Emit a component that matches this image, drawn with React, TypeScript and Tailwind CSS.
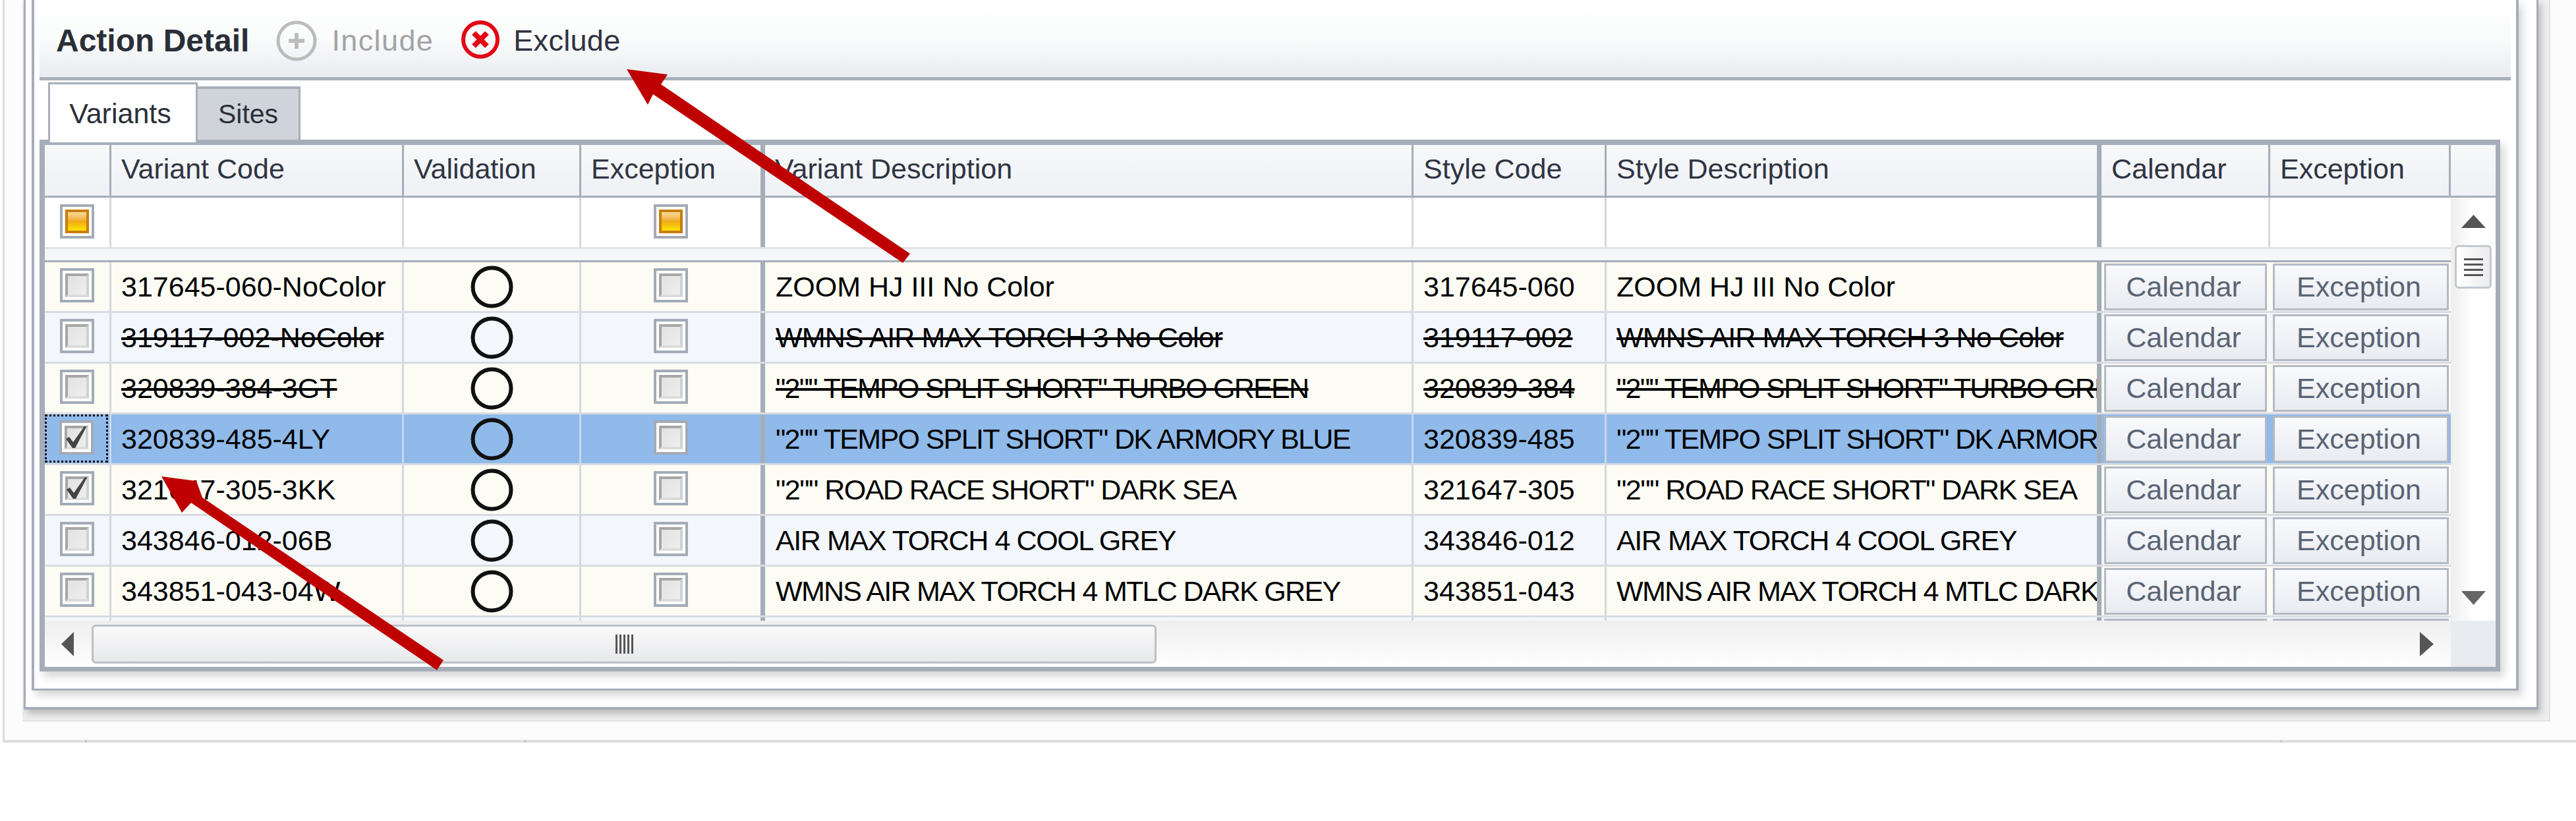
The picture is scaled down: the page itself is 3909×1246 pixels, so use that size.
import React from 'react';

type Row = {
    code: string;
    desc: string;
    style: string;
    tight: string;
    struck?: boolean;
    checked?: boolean;
    selected?: boolean;
};

const rows: Row[] = [
    { code: '317645-060-NoColor', desc: 'ZOOM HJ III No Color', style: '317645-060', tight: '' },
    { code: '319117-002-NoColor', desc: 'WMNS AIR MAX TORCH 3 No Color', style: '319117-002', tight: 'tracking-[-0.86px]', struck: true },
    { code: '320839-384-3GT', desc: '"2"" TEMPO SPLIT SHORT" TURBO GREEN', style: '320839-384', tight: 'tracking-[-1.7px]', struck: true },
    { code: '320839-485-4LY', desc: '"2"" TEMPO SPLIT SHORT" DK ARMORY BLUE', style: '320839-485', tight: 'tracking-[-1.64px]', checked: true, selected: true },
    { code: '321647-305-3KK', desc: '"2"" ROAD RACE SHORT" DARK SEA', style: '321647-305', tight: 'tracking-[-1.5px]', checked: true },
    { code: '343846-012-06B', desc: 'AIR MAX TORCH 4 COOL GREY', style: '343846-012', tight: 'tracking-[-1.4px]' },
    { code: '343851-043-04W', desc: 'WMNS AIR MAX TORCH 4 MTLC DARK GREY', style: '343851-043', tight: 'tracking-[-1.7px]' },
    { code: '', desc: '', style: '', tight: '' },
];

const Check = ({ on, orange }: { on?: boolean; orange?: boolean }) => (
    <div className="mb-[4px] h-[52px] w-[52px] shrink-0 border-[4px] border-[#a3abb6] bg-white p-[4px]">
        {orange ? (
            <div className="h-full w-full border-[4px] border-[#c97d10] bg-gradient-to-b from-[#f6dc9a] via-[#efaa14] to-[#ffe600]" />
        ) : (
            <div className="relative h-full w-full border-[4px] border-[#a6a6a6] border-r-[#d0d0d0] border-b-[#dcdcdc] bg-gradient-to-br from-[#e2e2e2] to-[#eeeeee]">
                {on && (
                    <svg viewBox="0 0 36 36" className="absolute -inset-[4px] h-[36px] w-[36px] overflow-visible">
                        <path d="M2 20 L7 17 L13 25 L30 1 L33 2 L16 34 L12 34 Z" fill="#444" />
                    </svg>
                )}
            </div>
        )}
    </div>
);

const Circle = () => (
    <svg viewBox="0 0 65 65" className="h-[65px] w-[65px]">
        <circle cx="32.5" cy="32.5" r="29" fill="none" stroke="#111" strokeWidth="6" />
    </svg>
);

const GridButton = ({ label, width }: { label: string; width: string }) => (
    <div className={`mt-[2px] flex h-[71px] items-center justify-center border-[3px] border-[#b4bac2] bg-gradient-to-b from-[#f8fafd] to-[#e8ebf0] pr-[6px] text-[#5a6474] ${width}`}>
        {label}
    </div>
);

const HeaderCell = ({ label, className }: { label?: string; className: string }) => (
    <div className={`flex h-full shrink-0 items-center overflow-hidden whitespace-nowrap pl-[15px] pb-[4px] text-[#2f3542] ${className}`}>
        {label}
    </div>
);

const DataRow = ({ row }: { row: Row }) => {
    const bg = row.selected ? 'bg-[#8fbaea]' : rows.indexOf(row) % 2 === 0 ? 'bg-[#fcfcf4]' : 'bg-[#f3f6fb]';
    const strike = row.struck ? 'line-through decoration-[4px] decoration-black' : '';
    const sep = row.selected ? 'border-r-[3px] border-[#c8d8ec]' : 'border-r-[3px] border-[#d4d8de]';
    return (
        <div className={`flex h-[77px] shrink-0 border-b-[3px] border-[#d8dce2] text-black ${bg}`}>
            <div className={`flex h-full w-[101px] shrink-0 ${sep}`}>
                {row.selected ? (
                    <div className="flex h-[73px] w-[96px] items-center justify-center border-[3px] border-dotted border-black">
                        <Check on={row.checked} />
                    </div>
                ) : (
                    <div className="flex h-full w-full items-center justify-center pr-[1px]">
                        <Check on={row.checked} />
                    </div>
                )}
            </div>
            <div className={`flex h-full w-[444px] shrink-0 items-center overflow-hidden whitespace-nowrap pl-[15px] ${sep}`}>
                <span className={strike}>{row.code}</span>
            </div>
            <div className={`flex h-full w-[269px] shrink-0 items-center justify-center ${sep}`}>
                <Circle />
            </div>
            <div className="flex h-full w-[279px] shrink-0 items-center justify-center border-r-[7px] border-[#a5adb9]">
                <Check />
            </div>
            <div className={`flex h-full w-[984px] shrink-0 items-center overflow-hidden whitespace-nowrap pl-[16px] ${sep}`}>
                <span className={`${strike} ${row.tight}`}>{row.desc}</span>
            </div>
            <div className={`flex h-full w-[293px] shrink-0 items-center overflow-hidden whitespace-nowrap pl-[15px] ${sep}`}>
                <span className={strike}>{row.style}</span>
            </div>
            <div className="flex h-full w-[751px] shrink-0 items-center overflow-hidden whitespace-nowrap border-r-[7px] border-[#a5adb9] pl-[15px]">
                <span className={`${strike} ${row.tight}`}>{row.desc}</span>
            </div>
            <div className="h-full w-[256px] shrink-0 pl-[4px]">
                <GridButton label="Calendar" width="w-[247px]" />
            </div>
            <div className="h-full w-[274px] shrink-0 pl-[4px]">
                <GridButton label="Exception" width="w-[267px]" />
            </div>
        </div>
    );
};

const Toolbar = () => (
    <div className="flex h-[122px] w-[3750px] items-center border-b-[5px] border-[#a9b0ba] bg-gradient-to-b from-white via-[#fafbfb] to-[#e9ecf0] pb-[2px] pl-[25px] pt-[8px]">
        <span className="text-[48px] font-bold text-[#2a2f38]">Action Detail</span>
        <svg viewBox="0 0 62 62" className="ml-[41px] h-[62px] w-[62px]">
            <circle cx="31" cy="31" r="28" fill="none" stroke="#bcbcbc" strokeWidth="5" />
            <path d="M31 19 V43 M19 31 H43" stroke="#bcbcbc" strokeWidth="6" />
        </svg>
        <span className="ml-[22px] text-[45px] tracking-[1.4px] text-[#a3a3a8]">Include</span>
        <svg viewBox="0 0 60 60" className="ml-[41px] mb-[4px] h-[60px] w-[60px]">
            <circle cx="30" cy="30" r="26" fill="none" stroke="#e30613" strokeWidth="6" />
            <path d="M20 20 L40 40 M40 20 L20 40" stroke="#e30613" strokeWidth="8" />
        </svg>
        <span className="ml-[20px] text-[45px] tracking-[0.3px] text-[#2f3340]">Exclude</span>
    </div>
);

const Tabs = () => (
    <div className="flex h-[90px] items-end pl-[13px]">
        <div className="relative z-10 -mb-[4px] flex h-[91px] w-[227px] items-center justify-center border-x-[3px] border-t-[3px] border-[#a7afba] border-b-0 bg-white pr-[8px] text-[43px] text-[#2b2f38]">
            Variants
        </div>
        <div className="flex h-[81px] w-[156px] items-center justify-center border-t-[4px] border-r-[3px] border-[#a7afba] bg-[#cfd4da] text-[41px] text-[#2b2f38]">
            Sites
        </div>
    </div>
);

const VerticalScroll = () => (
    <div className="flex h-full w-[68px] shrink-0 flex-col items-center bg-gradient-to-r from-[#eeeeee] via-white to-white pt-[26px]">
        <svg viewBox="0 0 37 20" className="h-[20px] w-[37px] shrink-0">
            <path d="M18.5 0 L37 20 H0 Z" fill="#555" />
        </svg>
        <div className="mt-[26px] flex h-[66px] w-[56px] shrink-0 flex-col items-center justify-center gap-[5px] rounded-[6px] border-[3px] border-[#c3c8cf] bg-gradient-to-r from-white to-[#ececec]">
            <div className="h-[3px] w-[29px] bg-[#555]" />
            <div className="h-[3px] w-[29px] bg-[#555]" />
            <div className="h-[3px] w-[29px] bg-[#555]" />
            <div className="h-[3px] w-[29px] bg-[#555]" />
        </div>
        <svg viewBox="0 0 37 21" className="mb-[24px] mt-auto h-[21px] w-[37px] shrink-0">
            <path d="M0 0 H37 L18.5 21 Z" fill="#666" />
        </svg>
    </div>
);

const HorizontalScroll = () => (
    <div className="flex h-[70px] shrink-0">
        <div className="flex h-full w-[3651px] items-center bg-gradient-to-b from-[#eeeeee] to-white pl-[25px]">
            <svg viewBox="0 0 19 37" className="h-[37px] w-[19px] shrink-0">
                <path d="M19 0 V37 L0 18.5 Z" fill="#555" />
            </svg>
            <div className="ml-[27px] flex h-[59px] w-[1616px] shrink-0 items-center justify-center gap-[3px] rounded-[6px] border-[3px] border-[#bcc1c8] bg-gradient-to-b from-[#fafafa] to-[#e7e8ea]">
                <div className="h-[29px] w-[3px] bg-[#555]" />
                <div className="h-[29px] w-[3px] bg-[#555]" />
                <div className="h-[29px] w-[3px] bg-[#555]" />
                <div className="h-[29px] w-[3px] bg-[#555]" />
                <div className="h-[29px] w-[3px] bg-[#555]" />
            </div>
            <svg viewBox="0 0 21 37" className="ml-auto mr-[26px] h-[37px] w-[21px] shrink-0">
                <path d="M0 0 L21 18.5 L0 37 Z" fill="#555" />
            </svg>
        </div>
        <div className="h-full w-[68px] bg-[#e8ebf0]" />
    </div>
);

const Grid = () => (
    <div className="h-[807px] w-[3734px] border-y-[8px] border-l-[8px] border-r-[7px] border-[#a5adb9] bg-white text-[43px] shadow-[6px_8px_12px_rgba(0,0,0,0.16)]">
        {/* Header */}
        <div className="flex h-[80px] border-b-[3px] border-[#a5adb9] bg-gradient-to-b from-[#f7f8fa] to-[#eef1f5]">
            <HeaderCell className="w-[101px] border-r-[3px] border-[#a5adb9]" />
            <HeaderCell label="Variant Code" className="w-[444px] border-r-[3px] border-[#a5adb9]" />
            <HeaderCell label="Validation" className="w-[269px] border-r-[3px] border-[#a5adb9]" />
            <HeaderCell label="Exception" className="w-[279px] border-r-[7px] border-[#a5adb9]" />
            <HeaderCell label="Variant Description" className="w-[984px] border-r-[3px] border-[#a5adb9]" />
            <HeaderCell label="Style Code" className="w-[293px] border-r-[3px] border-[#a5adb9]" />
            <HeaderCell label="Style Description" className="w-[751px] border-r-[7px] border-[#a5adb9]" />
            <HeaderCell label="Calendar" className="w-[256px] border-r-[3px] border-[#a5adb9]" />
            <HeaderCell label="Exception" className="w-[274px] border-r-[3px] border-[#a5adb9]" />
            <HeaderCell className="w-[68px]" />
        </div>

        <div className="flex h-[642px]">
            <div className="flex h-full w-[3651px] shrink-0 flex-col overflow-hidden">
                {/* Filter row */}
                <div className="flex h-[78px] shrink-0 border-b-[3px] border-[#dfe2e7] bg-white">
                    <div className="flex h-full w-[101px] items-center justify-center border-r-[3px] border-[#d4d8de] pr-[1px]">
                        <Check orange />
                    </div>
                    <div className="h-full w-[444px] border-r-[3px] border-[#d4d8de]" />
                    <div className="h-full w-[269px] border-r-[3px] border-[#d4d8de]" />
                    <div className="flex h-full w-[279px] items-center justify-center border-r-[7px] border-[#a5adb9]">
                        <Check orange />
                    </div>
                    <div className="h-full w-[984px] border-r-[3px] border-[#d4d8de]" />
                    <div className="h-full w-[293px] border-r-[3px] border-[#d4d8de]" />
                    <div className="h-full w-[751px] border-r-[7px] border-[#a5adb9]" />
                    <div className="h-full w-[256px] border-r-[3px] border-[#d4d8de]" />
                </div>
                <div className="h-[20px] shrink-0 border-b-[3px] border-[#a5adb9] bg-[#f5f7fa]" />
                {rows.map((row) => (
                    <DataRow key={row.code || 'next'} row={row} />
                ))}
            </div>
            <VerticalScroll />
        </div>

        <HorizontalScroll />
    </div>
);

const App = () => (
    <div className="relative h-[1246px] w-[3909px] overflow-hidden bg-white font-['Liberation_Sans',Arial,sans-serif]">
        <div className="ml-[4px] h-[1123px] border-l-[3px] border-[#dcdcdc] bg-[#fcfcfc] pl-[27px]">
            {/* Shadow band */}
            <div className="h-[1095px] w-[3836px] overflow-hidden border-r-[2px] border-b-[2px] border-[#e2e2e2] bg-[#eeeeee]">
                {/* Outer frame */}
                <div className="ml-[2px] h-[1077px] w-[3816px] border-x-[3px] border-b-[4px] border-[#a5adb9] bg-white pl-[9px] shadow-[4px_6px_10px_rgba(0,0,0,0.22)]">
                    {/* Inner frame */}
                    <div className="h-[1048px] w-[3774px] border-x-[4px] border-b-[3px] border-[#a5adb9] bg-white pl-[8px] shadow-[6px_8px_12px_rgba(0,0,0,0.16)]">
                        <Toolbar />
                        <Tabs />
                        <Grid />
                    </div>
                </div>
            </div>
        </div>
        <div className="ml-[4px] flex h-[4px]">
            <div className="h-full w-[127px] border-r-[2px] border-[#bdbdbd] bg-[#dedede]" />
            <div className="h-full w-[667px] border-r-[2px] border-[#bdbdbd] bg-[#dedede]" />
            <div className="h-full w-[2665px] border-r-[2px] border-[#bdbdbd] bg-[#dedede]" />
            <div className="h-full flex-1 bg-[#dedede]" />
        </div>

        {/* Annotation arrows drawn over the screenshot */}
        <svg viewBox="0 0 3909 1246" className="pointer-events-none absolute inset-0 h-[1246px] w-[3909px]">
            <polygon points="951,105 1013,113 1003,128 1381,385 1370,399 991,143 983,159" fill="#bf0000" />
            <polygon points="245,723 298,730 307,755 673,1002 663,1017 290,763 276,778" fill="#bf0000" />
        </svg>
    </div>
);

export default App;
